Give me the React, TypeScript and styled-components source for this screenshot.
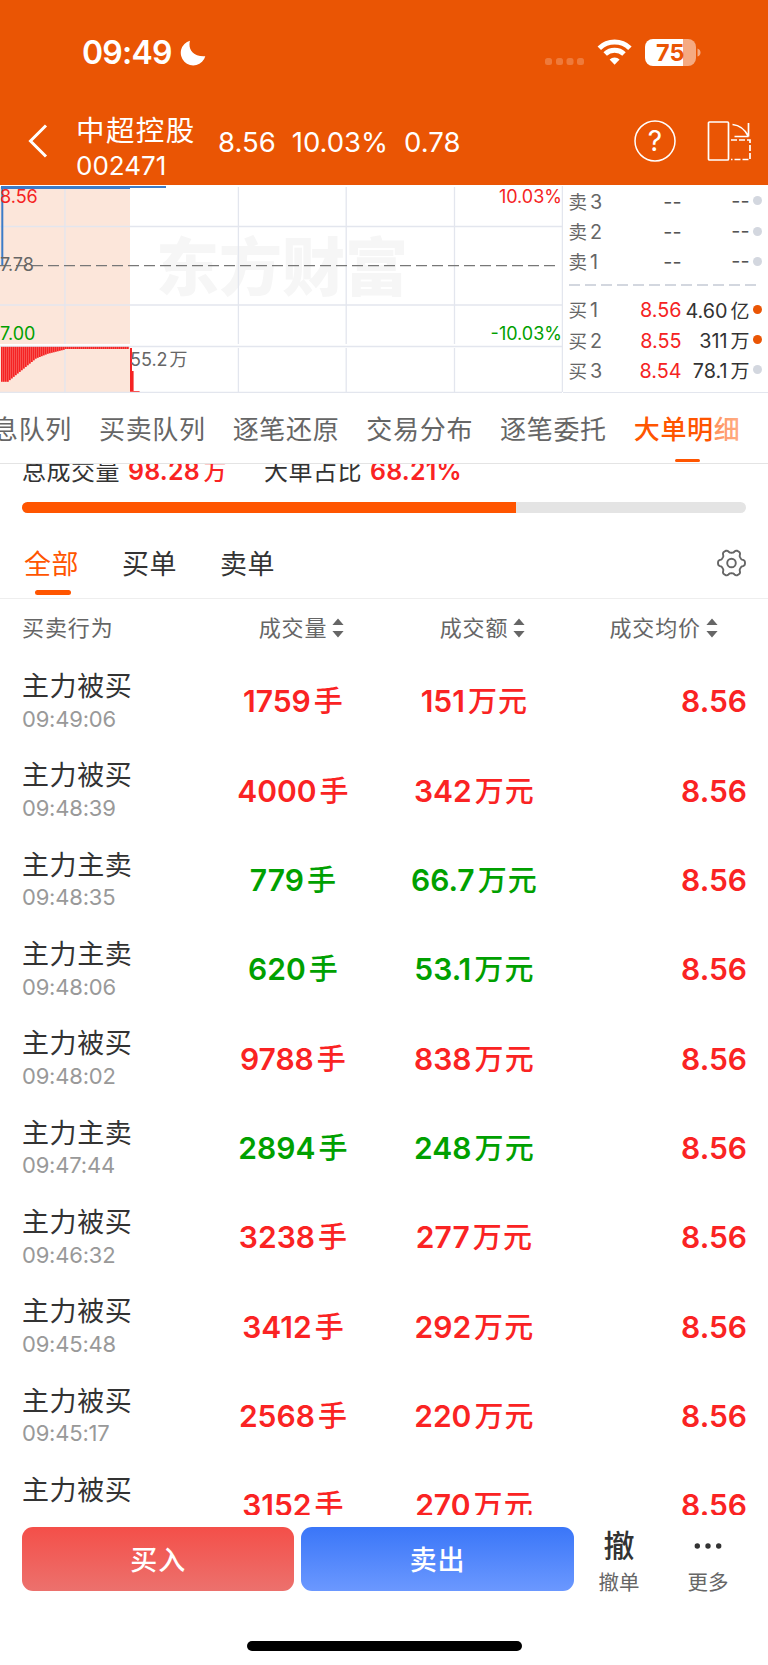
import React from "react";
import styled, { createGlobalStyle } from "styled-components";

const Global = createGlobalStyle`
  * { box-sizing: border-box; }
  body { margin: 0; background: #fff; font-family: Inter, "Noto Sans CJK SC", sans-serif; }
`;

const Screen = styled.div`
  width: 768px;
  height: 1665px;
  display: flex;
  flex-direction: column;
  overflow: hidden;
  background: #fff;
  color: #333;
`;

const Top = styled.header`
  height: 185px;
  flex: none;
  background: #ea5504;
  color: #fff;
`;

const StatusBar = styled.div`
  height: 104px;
  padding: 1px 67px 0 82px;
  display: flex;
  align-items: center;
  justify-content: space-between;
`;

const Clock = styled.div`
  display: flex;
  align-items: center;
  gap: 8px;
  font-size: 32px;
  font-weight: 600;
  line-height: 40px;
  letter-spacing: -0.75px;
`;

const Signals = styled.div`
  display: flex;
  align-items: center;
`;

const NavBar = styled.div`
  height: 81px;
  display: flex;
  padding: 0 17.5px 0 28px;
`;

const Back = styled.div`
  width: 48px;
  padding-top: 20px;
`;

const Stock = styled.div`
  width: 142px;
  padding-top: 9px;
`;

const StockName = styled.div`
  font-size: 28.5px;
  letter-spacing: 1.4px;
  line-height: 36px;
  white-space: nowrap;
`;

const StockCode = styled.div`
  font-size: 26px;
  line-height: 34px;
`;

const Quote = styled.div`
  flex: 1;
  display: flex;
  gap: 16px;
  font-size: 27.5px;
  line-height: 34px;
  padding-top: 21px;
`;

const NavIcons = styled.div`
  display: flex;
  gap: 31px;
  padding-top: 16px;
`;

const Market = styled.section`
  height: 208px;
  flex: none;
  display: flex;
`;

const Book = styled.div`
  flex: 1;
  min-width: 0;
  padding: 0.7px 6.5px 0 5.5px;
  border-bottom: 1.5px solid #e3e6ee;
`;

const BookRow = styled.div`
  height: 30.3px;
  display: flex;
  align-items: center;
  font-size: 19.8px;
`;

const Side = styled.span`
  width: 113px;
  display: flex;
  justify-content: space-between;
  align-items: baseline;
  color: #666;
`;

const SideName = styled.span`
  font-size: 18.5px;
  margin-right: 3px;
`;

const Price = styled.span<{ $up?: boolean }>`
  color: ${(p) => (p.$up ? "#f52323" : "#555")};
`;

const Volume = styled.span<{ $muted?: boolean }>`
  flex: 1;
  text-align: right;
  white-space: nowrap;
  color: ${(p) => (p.$muted ? "#555" : "#333")};
`;

const Unit = styled.span`
  font-size: 19px;
  margin-left: 3px;
`;

const Dot = styled.i<{ $on?: boolean }>`
  width: 9px;
  height: 9px;
  margin-left: 3px;
  border-radius: 50%;
  background: ${(p) => (p.$on ? "#ea5504" : "#d3d7df")};
`;

const BookDivider = styled.div`
  height: 17.5px;
  display: flex;
  align-items: center;
`;

const Tabs = styled.nav`
  height: 71px;
  flex: none;
  display: flex;
  gap: 27px;
  padding-left: 99px;
  overflow: hidden;
  border-bottom: 1px solid #e4e4e4;
  position: relative;
`;

const Tab = styled.div<{ $active?: boolean; $clipped?: boolean }>`
  flex: none;
  height: 70px;
  width: ${(p) => (p.$clipped ? 80 : 106.7)}px;
  margin-left: ${(p) => (p.$clipped ? "-107px" : "0")};
  display: flex;
  flex-direction: column;
  align-items: center;
  white-space: nowrap;
  padding-top: 17px;
  font-size: 26px;
  line-height: 40px;
  letter-spacing: 0.68px;
  font-weight: ${(p) => (p.$active ? 500 : 400)};
  color: ${(p) => (p.$active ? "#ff5500" : "#666")};
`;

const TabMark = styled.i`
  width: 25px;
  height: 3.5px;
  margin-top: 8.5px;
  border-radius: 2px;
  background: #ff5500;
`;

const TabFade = styled.i`
  position: absolute;
  top: 0;
  right: 0;
  width: 56px;
  height: 60px;
  background: linear-gradient(90deg, rgba(255, 255, 255, 0.35), rgba(255, 255, 255, 0.7));
`;

const Summary = styled.section`
  height: 38px;
  flex: none;
  overflow: hidden;
  display: flex;
  align-items: flex-start;
  padding-left: 22px;
  font-size: 24px;
  line-height: 34px;
  white-space: nowrap;
`;

const SummaryItem = styled.div<{ $width: number }>`
  width: ${(p) => p.$width}px;
  margin-top: -10px;
  letter-spacing: 0.5px;
`;

const SummaryValue = styled.b`
  margin-left: 8px;
  font-size: 25px;
  font-weight: 600;
  letter-spacing: 0.2px;
  color: #fa2323;
`;

const SummaryUnit = styled.span`
  margin-left: 3.5px;
  font-size: 23px;
  font-weight: 500;
`;

const Progress = styled.div`
  height: 11px;
  flex: none;
  margin: 0 22px;
  border-radius: 6px;
  overflow: hidden;
  background: #e4e4e4;
`;

const ProgressFill = styled.div`
  width: 68.21%;
  height: 100%;
  background: #ff5500;
`;

const Filters = styled.div`
  height: 86px;
  flex: none;
  display: flex;
  align-items: flex-start;
  padding: 32px 22px 0 24px;
  border-bottom: 1px solid #eee;
`;

const Filter = styled.div<{ $active?: boolean }>`
  width: 98px;
  display: flex;
  flex-direction: column;
  font-size: 27px;
  line-height: 40px;
  letter-spacing: 0.6px;
  color: ${(p) => (p.$active ? "#ff5500" : "#333")};
`;

const FilterMark = styled.i`
  width: 36px;
  height: 5.5px;
  margin: 4.5px 0 0 10.5px;
  border-radius: 3px;
  background: #ff5500;
`;

const Gear = styled.div`
  margin-left: auto;
  padding-top: 4px;
`;

const TableHead = styled.div`
  height: 58px;
  flex: none;
  display: grid;
  grid-template-columns: repeat(4, 181px);
  align-items: center;
  padding: 0 22px 4px;
  font-size: 22px;
  letter-spacing: 0.9px;
  color: #666;

  svg {
    margin-top: 4px;
  }
`;

const HeadCell = styled.div<{ $place?: "center" | "end" }>`
  display: flex;
  align-items: center;
  justify-content: ${(p) => p.$place ?? "flex-start"};
  gap: 5px;
  padding-left: ${(p) => (p.$place === "center" ? 16 : 0)}px;
  padding-right: ${(p) => (p.$place === "end" ? 28 : 0)}px;
`;

const List = styled.main`
  height: 858px;
  flex: none;
  overflow: hidden;
`;

const Row = styled.div`
  height: 89.33px;
  display: grid;
  grid-template-columns: repeat(4, 181px);
  padding: 0 22px;
`;

const Action = styled.div`
  padding-top: 11px;
  font-size: 27px;
  line-height: 38px;
  letter-spacing: 0.6px;
`;

const Time = styled.div`
  margin-top: -1.3px;
  font-size: 22px;
  line-height: 28px;
  letter-spacing: -0.2px;
  color: #999;
`;

const Amount = styled.div<{ $sell?: boolean; $end?: boolean }>`
  padding-top: 24.3px;
  margin-right: ${(p) => (p.$end ? -1 : 0)}px;
  text-align: ${(p) => (p.$end ? "right" : "center")};
  font-size: 30px;
  line-height: 40px;
  font-weight: 600;
  white-space: nowrap;
  color: ${(p) => (p.$sell ? "#00a000" : "#fa2323")};
`;

const AmountUnit = styled.span`
  margin-left: 3px;
  font-size: 29px;
  font-weight: 500;
  letter-spacing: 1.2px;
`;

const Bottom = styled.footer`
  flex: 1;
  display: flex;
  flex-direction: column;
  align-items: center;
  padding-top: 12px;
`;

const Trade = styled.div`
  width: 768px;
  height: 64px;
  display: flex;
  gap: 7px;
  padding-left: 22px;
`;

const TradeButton = styled.button<{ $kind: "buy" | "sell" }>`
  width: 272.3px;
  flex: none;
  height: 64px;
  padding: 3px 0 0;
  border: 0;
  border-radius: 11px;
  color: #fff;
  font: 500 27px/40px Inter, "Noto Sans CJK SC", sans-serif;
  letter-spacing: 0.8px;
  background: ${(p) =>
    p.$kind === "buy"
      ? "linear-gradient(#f44f49, #ec716d)"
      : "linear-gradient(#3a76f8, #6b98ff)"};
`;

const Tool = styled.div`
  width: 89px;
  flex: none;
  margin-left: -6px;
  margin-right: -1px;
  display: flex;
  flex-direction: column;
  align-items: center;
  font-size: 20.5px;
  color: #666;
  line-height: 30px;
`;

const ToolIcon = styled.div`
  height: 38px;
  flex: none;
  margin-bottom: 3px;
  display: flex;
  align-items: center;
  font-size: 31px;
  font-weight: 500;
  color: #333;
`;

const HomeIndicator = styled.div`
  width: 275px;
  height: 9.5px;
  margin-top: 50px;
  border-radius: 5px;
  background: #000;
`;

const Sort = () => (
  <svg width="12" height="20" viewBox="0 0 12 20" fill="#666">
    <path d="M6 .5 11.6 7H.4zM6 19.5 11.6 13H.4z" />
  </svg>
);

const gearOutline =
  Array.from({ length: 120 }, (_, i) => {
    const angle = (i / 120) * Math.PI * 2;
    const r = 11.9 + (1.6 * Math.tanh(1.8 * Math.cos(6 * angle))) / Math.tanh(1.8);
    return `${i ? "L" : "M"}${(14.5 + r * Math.cos(angle)).toFixed(2)} ${(14 + r * Math.sin(angle)).toFixed(2)}`;
  }).join("") + "Z";

const volumeDepth = (i: number) => {
  if (i < 4) return 35;
  if (i < 18) return 35 - (i - 3) * 1.65;
  if (i < 24) return 11 - (i - 18) * 0.8;
  if (i < 32) return 6.5 - (i - 24) * 0.5;
  return 2.2;
};

const ChartSvg = styled.svg`
  flex: none;
  display: block;
`;

const Chart = () => (
  <ChartSvg width="563" height="208" viewBox="0 0 563 208">
    <rect x="0" y="2" width="130" height="157" fill="#fce6da" />
    <rect x="0" y="161" width="130" height="46" fill="#fce6da" />
    <text x="156" y="104.5" fontFamily="Noto Sans CJK SC" fontWeight="900" fontSize="63" fill="#f6f6f6">
      东方财富
    </text>
    <g stroke="#e3e6ee" strokeWidth="1.3">
      <path d="M0 41.5H562M0 120H562M0 161.5H562M0 207.3H562" />
      <path d="M65 2V159M65 163V207M238.4 2V159M238.4 163V207M346.2 2V159M346.2 163V207M454.5 2V159M454.5 163V207M562.4 1V207" />
    </g>
    <path d="M0 80.6H558" stroke="#777" strokeWidth="1.2" strokeDasharray="11 5" />
    <path d="M2.3 3V80" stroke="#3c7cc8" strokeWidth="2" />
    <path d="M1 2.5H130" stroke="#3c7cc8" strokeWidth="3" />
    <path d="M130 2H166" stroke="#3c7cc8" strokeWidth="2" />
    {Array.from({ length: 64 }, (_, i) => (
      <rect key={i} x={i * 2 + 1} y="161.8" width="1.75" height={volumeDepth(i)} fill="#f52323" />
    ))}
    <path d="M130 163h2v23h1.6v20h6v.8H130z" fill="#f52323" />
    <g fontFamily="Inter, 'Noto Sans CJK SC', sans-serif" fontSize="18">
      <text x="0" y="18" fill="#f52323">8.56</text>
      <text x="0" y="86" fill="#666">7.78</text>
      <text x="0" y="155" fill="#00a000">7.00</text>
      <text x="562" y="18" textAnchor="end" fill="#f52323">10.03%</text>
      <text x="562" y="155" textAnchor="end" fill="#00a000">-10.03%</text>
      <text x="130" y="181" fill="#666">55.2<tspan dx="2">万</tspan></text>
    </g>
  </ChartSvg>
);

const asks = ["3", "2", "1"];
const bids: [string, string, string, string, boolean][] = [
  ["1", "8.56", "4.60", "亿", true],
  ["2", "8.55", "311", "万", true],
  ["3", "8.54", "78.1", "万", false],
];

const trades: [string, string, string, string, boolean][] = [
  ["主力被买", "09:49:06", "1759", "151", false],
  ["主力被买", "09:48:39", "4000", "342", false],
  ["主力主卖", "09:48:35", "779", "66.7", true],
  ["主力主卖", "09:48:06", "620", "53.1", true],
  ["主力被买", "09:48:02", "9788", "838", false],
  ["主力主卖", "09:47:44", "2894", "248", true],
  ["主力被买", "09:46:32", "3238", "277", false],
  ["主力被买", "09:45:48", "3412", "292", false],
  ["主力被买", "09:45:17", "2568", "220", false],
  ["主力被买", "", "3152", "270", false],
];

export default function App() {
  return (
    <Screen>
      <Global />
      <Top>
        <StatusBar>
          <Clock>
            09:49
            <svg width="26" height="26" viewBox="0 0 26 26" fill="#fff">
              <path d="M10 .8C8 8 11.5 17 25.3 16.2A12.5 12.5 0 1 1 10 .8z" />
            </svg>
          </Clock>
          <Signals>
            <svg width="156" height="30" viewBox="0 0 156 30">
              <g fill="#fff" fillOpacity=".22">
                <rect x="0" y="20" width="7" height="7" rx="2.5" />
                <rect x="11" y="20" width="7" height="7" rx="2.5" />
                <rect x="21.5" y="20" width="7" height="7" rx="2.5" />
                <rect x="32" y="20" width="7" height="7" rx="2.5" />
              </g>
              <g fill="none" stroke="#fff" strokeWidth="5">
                <path d="M54.3 10.2a22 22 0 0 1 30.6 0" />
                <path d="M60.2 16a13.6 13.6 0 0 1 18.8 0" />
              </g>
              <path d="M69.6 26.8l-5-5.3a7.4 7.4 0 0 1 10 0z" fill="#fff" />
              <path d="M138 1h5a8 8 0 0 1 8 8v11a8 8 0 0 1-8 8h-5z" fill="#fff" fillOpacity=".5" />
              <path d="M138 1h-30a8 8 0 0 0-8 8v11a8 8 0 0 0 8 8h30z" fill="#fff" />
              <path d="M152.5 10.5q3 1 3 4t-3 4z" fill="#fff" fillOpacity=".5" />
              <text x="111" y="23" fontFamily="Inter" fontWeight="700" fontSize="23.5" fill="#ea5504">75</text>
            </svg>
          </Signals>
        </StatusBar>
        <NavBar>
          <Back>
            <svg width="20" height="34" viewBox="0 0 20 34" fill="none" stroke="#fff" strokeWidth="3">
              <path d="M18 1.5 2.5 17 18 32.5" />
            </svg>
          </Back>
          <Stock>
            <StockName>中超控股</StockName>
            <StockCode>002471</StockCode>
          </Stock>
          <Quote>
            <span>8.56</span>
            <span>10.03%</span>
            <span>0.78</span>
          </Quote>
          <NavIcons>
            <svg width="42" height="42" viewBox="0 0 42 42">
              <circle cx="21" cy="21" r="20" fill="none" stroke="#fff" strokeWidth="1.5" />
              <text x="21" y="31" textAnchor="middle" fontFamily="Inter" fontSize="28" fill="#fff">?</text>
            </svg>
            <svg width="44" height="42" viewBox="0 0 44 42" fill="none" stroke="#fff" strokeWidth="1.7">
              <rect x="1.5" y="2" width="20" height="38" rx="1" />
              <path d="M25.500 4.500Q36 5.500 41.500 16.500V3M41.500 16.500H27.500" />
              <path d="M24 20H43V39.5H24" strokeDasharray="6 2" />
            </svg>
          </NavIcons>
        </NavBar>
      </Top>

      <Market>
        <Chart />
        <Book>
          {asks.map((level) => (
            <BookRow key={level}>
              <Side>
                <span><SideName>卖</SideName>{level}</span>
                <Price>--</Price>
              </Side>
              <Volume $muted>--</Volume>
              <Dot />
            </BookRow>
          ))}
          <BookDivider>
            <svg width="190" height="2" viewBox="0 0 190 2">
              <path d="M0 1H189" stroke="#d3d7df" strokeWidth="2" strokeDasharray="11 5" />
            </svg>
          </BookDivider>
          {bids.map(([level, price, volume, unit, on]) => (
            <BookRow key={level}>
              <Side>
                <span><SideName>买</SideName>{level}</span>
                <Price $up>{price}</Price>
              </Side>
              <Volume>{volume}<Unit>{unit}</Unit></Volume>
              <Dot $on={on} />
            </BookRow>
          ))}
        </Book>
      </Market>

      <Tabs>
        <Tab $clipped>息队列</Tab>
        <Tab>买卖队列</Tab>
        <Tab>逐笔还原</Tab>
        <Tab>交易分布</Tab>
        <Tab>逐笔委托</Tab>
        <Tab $active>
          大单明细
          <TabMark />
        </Tab>
        <TabFade />
      </Tabs>

      <Summary>
        <SummaryItem $width={242}>
          总成交量
          <SummaryValue>98.28<SummaryUnit>万</SummaryUnit></SummaryValue>
        </SummaryItem>
        <SummaryItem $width={240}>
          大单占比
          <SummaryValue>68.21%</SummaryValue>
        </SummaryItem>
      </Summary>
      <Progress>
        <ProgressFill />
      </Progress>

      <Filters>
        <Filter $active>
          全部
          <FilterMark />
        </Filter>
        <Filter>买单</Filter>
        <Filter>卖单</Filter>
        <Gear>
          <svg width="29" height="28" viewBox="0 0 29 28" fill="none" stroke="#666" strokeWidth="1.9" strokeLinejoin="round">
            <circle cx="14.5" cy="14" r="4.3" />
            <path d={gearOutline} />
          </svg>
        </Gear>
      </Filters>

      <TableHead>
        <HeadCell>买卖行为</HeadCell>
        <HeadCell $place="center">成交量<Sort /></HeadCell>
        <HeadCell $place="center">成交额<Sort /></HeadCell>
        <HeadCell $place="end">成交均价<Sort /></HeadCell>
      </TableHead>

      <List>
        {trades.map(([action, time, lots, value, sell], i) => (
          <Row key={i}>
            <Action>
              {action}
              <Time>{time}</Time>
            </Action>
            <Amount $sell={sell}>{lots}<AmountUnit>手</AmountUnit></Amount>
            <Amount $sell={sell}>{value}<AmountUnit>万元</AmountUnit></Amount>
            <Amount $end>8.56</Amount>
          </Row>
        ))}
      </List>

      <Bottom>
        <Trade>
          <TradeButton $kind="buy">买入</TradeButton>
          <TradeButton $kind="sell">卖出</TradeButton>
          <Tool>
            <ToolIcon>撤</ToolIcon>
            撤单
          </Tool>
          <Tool>
            <ToolIcon>
              <svg width="28" height="6" viewBox="0 0 28 6" fill="#333">
                <circle cx="3.3" cy="3" r="2.7" />
                <circle cx="14" cy="3" r="2.7" />
                <circle cx="24.7" cy="3" r="2.7" />
              </svg>
            </ToolIcon>
            更多
          </Tool>
        </Trade>
        <HomeIndicator />
      </Bottom>
    </Screen>
  );
}
